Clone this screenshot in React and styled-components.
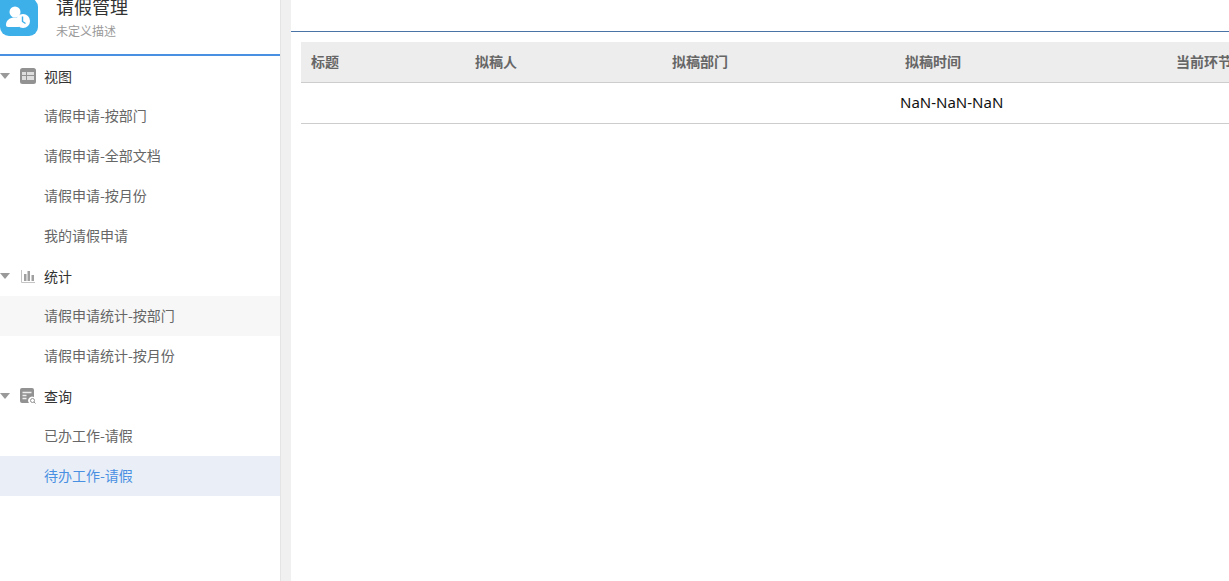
import styled, { createGlobalStyle } from "styled-components";

const GlobalStyle = createGlobalStyle`
    html, body {
        margin: 0;
        padding: 0;
        height: 100%;
        overflow: hidden;
        background: #fff;
    }
    body {
        font-family: "Noto Sans", "Noto Sans CJK SC", sans-serif;
    }
`;

const Page = styled.div`
    display: flex;
    height: 591px;
    margin-top: -10px;
`;

const Sidebar = styled.aside`
    width: 280px;
    flex-shrink: 0;
    border-right: 1px solid #e4e4e4;
    background: #fff;
`;

const AppHeader = styled.div`
    display: flex;
    gap: 18px;
    height: 56px;
    padding-top: 8px;
    border-bottom: 2px solid #4a90e2;
    overflow: hidden;
`;

const AppIcon = styled.div`
    width: 38px;
    height: 38px;
    border-radius: 0 9px 9px 9px;
    background: #3db0ea;
    display: flex;
    align-items: center;
    justify-content: center;
`;

const AppText = styled.div`
    display: flex;
    flex-direction: column;
`;

const AppTitle = styled.div`
    font-family: "Noto Sans CJK SC", sans-serif;
    font-size: 18px;
    line-height: 20px;
    margin-top: -2px;
    color: #333;
`;

const AppDesc = styled.div`
    font-family: "Noto Sans CJK SC", sans-serif;
    font-size: 12px;
    line-height: 16px;
    margin-top: 7px;
    color: #999;
`;

const GroupRow = styled.div`
    display: flex;
    align-items: center;
    height: 40px;
    line-height: 38px;
    color: #333;
    font-family: "Noto Sans CJK SC", sans-serif;
    font-size: 14px;
`;

const Caret = styled.span`
    flex-shrink: 0;
    width: 0;
    height: 0;
    border-left: 5px solid transparent;
    border-right: 5px solid transparent;
    border-top: 6px solid #999;
    margin-right: 10px;
`;

const GroupIcon = styled.svg`
    width: 16px;
    height: 16px;
    margin-right: 8px;
    flex-shrink: 0;
`;

const Item = styled.div`
    height: 40px;
    line-height: 38px;
    padding-left: 44px;
    font-family: "Noto Sans CJK SC", sans-serif;
    font-size: 14px;
    color: ${props => (props.$active ? "#4a90e2" : "#666")};
    background: ${props => (props.$active ? "#eaeff7" : props.$hover ? "#f7f7f7" : "transparent")};
`;

const Gutter = styled.div`
    width: 10px;
    flex-shrink: 0;
    background: #f0f0f0;
`;

const Main = styled.main`
    flex: 1;
    min-width: 0;
    overflow: hidden;
`;

const TopBar = styled.div`
    height: 41px;
    border-bottom: 1px solid #4a74a8;
`;

const TableWrap = styled.div`
    padding: 10px 0 0 10px;
`;

const Table = styled.table`
    width: 1075px;
    table-layout: fixed;
    border-collapse: separate;
    border-spacing: 0;
`;

const HeadCell = styled.th`
    width: ${props => props.$w}px;
    height: 41px;
    padding: 0 0 3px 10px;
    background: #ededed;
    border-bottom: 1px solid #cdcdcd;
    box-sizing: border-box;
    text-align: left;
    font-family: "Noto Sans CJK SC", sans-serif;
    font-size: 14px;
    font-weight: 700;
    color: #666;
    white-space: nowrap;
`;

const Cell = styled.td`
    height: 41px;
    padding: 0 0 2px 5px;
    border-bottom: 1px solid #cdcdcd;
    box-sizing: border-box;
    font-size: 15px;
    color: #111;
`;

const columns = [
    { title: "标题", width: 164 },
    { title: "拟稿人", width: 197 },
    { title: "拟稿部门", width: 233 },
    { title: "拟稿时间", width: 271 },
    { title: "当前环节", width: 210 },
];

function PersonClock() {
    return (
        <svg width="28" height="26" viewBox="0 0 28 26">
            <circle cx="10" cy="8" r="5.500" fill="#fff" />
            <path d="M1 21c0-5 4-7.500 9-7.500 2 0 3.500 .3 4.500 1-2 2-2.600 6 0 8.500H3c-1.300 0-2-.8-2-2z" fill="#fff" />
            <circle cx="18" cy="17" r="7" fill="#fff" />
            <path d="M17.500 12.500V17.500l3 2" fill="none" stroke="#3db0ea" strokeWidth="1.400" />
        </svg>
    );
}

function TableIcon() {
    return (
        <GroupIcon viewBox="0 0 16 16">
            <rect width="16" height="16" rx="2.500" fill="#929292" />
            <path d="M2 4h12v8H2z" fill="#dedede" />
            <path d="M2 7.500h12M6.500 4V12" stroke="#929292" strokeWidth="1" fill="none" />
        </GroupIcon>
    );
}

function ChartIcon() {
    return (
        <GroupIcon viewBox="0 0 16 16">
            <path d="M1.500 2v12.500H15" stroke="#c4c4c4" strokeWidth="1" fill="none" />
            <path d="M4 6h2.500v7H4zM7.500 3h2.500v10H7.500zM11.500 7H14v6h-2.500z" fill="#a0a0a0" />
        </GroupIcon>
    );
}

function QueryIcon() {
    return (
        <GroupIcon viewBox="0 0 16 16">
            <path d="M2 0h10a2 2 0 0 1 2 2v7a4 4 0 0 0-5 6H2a2 2 0 0 1-2-2V2a2 2 0 0 1 2-2z" fill="#929292" />
            <path d="M2.500 4.500h9M2.500 7.500h4M2.500 10.500h4" stroke="#eee" strokeWidth="1.500" fill="none" />
            <circle cx="12.500" cy="12.500" r="2" stroke="#929292" strokeWidth="1" fill="none" />
            <path d="M14 14l1.500 1.500" stroke="#929292" strokeWidth="1" />
        </GroupIcon>
    );
}

export default function App() {
    return (
        <>
            <GlobalStyle />
            <Page>
                <Sidebar>
                    <AppHeader>
                        <AppIcon>
                            <PersonClock />
                        </AppIcon>
                        <AppText>
                            <AppTitle>请假管理</AppTitle>
                            <AppDesc>未定义描述</AppDesc>
                        </AppText>
                    </AppHeader>
                    <GroupRow>
                        <Caret />
                        <TableIcon />
                        视图
                    </GroupRow>
                    <Item>请假申请-按部门</Item>
                    <Item>请假申请-全部文档</Item>
                    <Item>请假申请-按月份</Item>
                    <Item>我的请假申请</Item>
                    <GroupRow>
                        <Caret />
                        <ChartIcon />
                        统计
                    </GroupRow>
                    <Item $hover>请假申请统计-按部门</Item>
                    <Item>请假申请统计-按月份</Item>
                    <GroupRow>
                        <Caret />
                        <QueryIcon />
                        查询
                    </GroupRow>
                    <Item>已办工作-请假</Item>
                    <Item $active>待办工作-请假</Item>
                </Sidebar>
                <Gutter />
                <Main>
                    <TopBar />
                    <TableWrap>
                        <Table>
                            <thead>
                                <tr>
                                    {columns.map(col => (
                                        <HeadCell key={col.title} $w={col.width}>{col.title}</HeadCell>
                                    ))}
                                </tr>
                            </thead>
                            <tbody>
                                <tr>
                                    <Cell />
                                    <Cell />
                                    <Cell />
                                    <Cell>NaN-NaN-NaN</Cell>
                                    <Cell />
                                </tr>
                            </tbody>
                        </Table>
                    </TableWrap>
                </Main>
            </Page>
        </>
    );
}
